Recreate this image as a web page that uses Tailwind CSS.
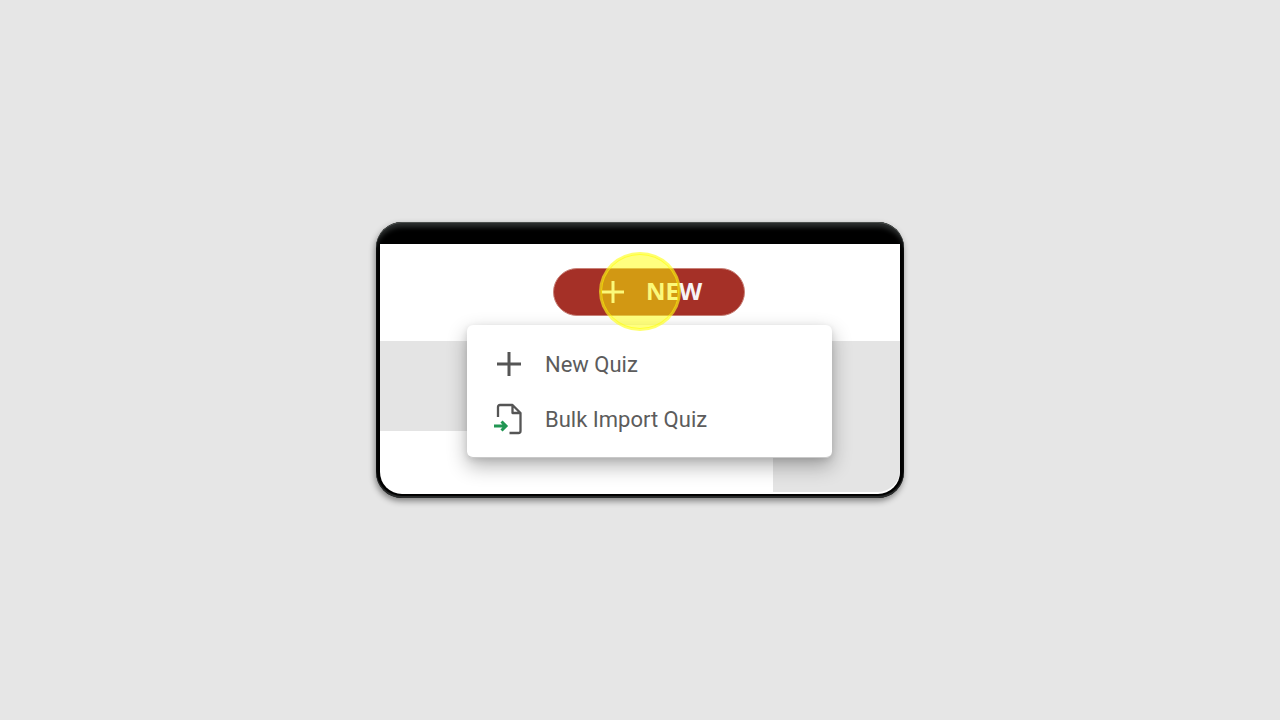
<!DOCTYPE html>
<html lang="en">
<head>
<meta charset="utf-8">
<meta name="viewport" content="width=device-width, initial-scale=1">
<title>New Quiz</title>
<script src="https://cdn.jsdelivr.net/npm/@tailwindcss/browser@4"></script>
</head>
<body class="flex min-h-screen items-center justify-center bg-[#e6e6e6]">
<main class="w-full max-w-[528px] rounded-[26px] bg-black px-1 pt-[22px] pb-1 shadow-[-1px_3px_6px_rgba(0,0,0,0.45),inset_0_1px_0_#4c504e,inset_0_7px_5px_-2px_#2c2f2f,inset_0_-2px_1px_#2c2e2e]">
  <div class="overflow-hidden rounded-b-[22px]">
    <header class="relative flex justify-center bg-white pt-6 pb-[25px] pl-[18px]">
      <button type="button" aria-haspopup="menu" aria-expanded="true" class="flex h-12 w-48 items-center gap-[22px] rounded-full border border-[#c98279] bg-[#a53027] pl-12 font-['Open_Sans',sans-serif] text-2xl font-bold text-[#f6f3f5]">
        <svg class="size-[22px] shrink-0" viewBox="0 0 22 22" fill="none" stroke="currentColor" stroke-width="3" aria-hidden="true"><path d="M11 0v22M0 11h22"/></svg>
        <span class="pb-0.5">NEW</span>
      </button>
      <!-- Open menu below the button -->
      <div role="menu" class="absolute inset-x-0 top-[81px] z-10 mr-[68px] ml-[87px] flex flex-col gap-px rounded-md border-b border-[#c9c9c9] bg-white pt-3 pb-[11px] font-[Roboto,sans-serif] text-[22px] text-[#5c5c5c] shadow-[0_8px_20px_rgba(0,0,0,0.3),0_2px_6px_rgba(0,0,0,0.1)]">
        <button type="button" role="menuitem" class="flex h-[54px] w-full items-center gap-5 pl-[26px]">
          <svg class="size-8 shrink-0" viewBox="0 0 32 32" fill="none" stroke="#555" stroke-width="3" aria-hidden="true"><path d="M16 4v24M4 16h24"/></svg>
          New Quiz
        </button>
        <button type="button" role="menuitem" class="flex h-[54px] w-full items-center gap-5 pl-[26px]">
          <svg class="size-8 shrink-0" viewBox="0 0 32 32" fill="none" aria-hidden="true">
            <path d="M5 14V4q0-2 2-2h12.500l8 8v18q0 2-2 2H16.500M19.500 2v8h8" stroke="#555" stroke-width="2.300" stroke-linejoin="round"/>
            <path d="M1 23h11M8.500 18.500l4.500 4.500l-4.500 4.500" stroke="#219653" stroke-width="3"/>
          </svg>
          Bulk Import Quiz
        </button>
      </div>
      <!-- Click highlight -->
      <span class="pointer-events-none absolute top-2 left-[219px] z-20 h-[79px] w-[82px] rounded-[50%] border-2 border-[#ffff40]/30 bg-[#ffff00]/50 shadow-[inset_0_0_0_1px_rgba(255,255,0,0.6)]" aria-hidden="true"></span>
    </header>
    <div class="h-[90px] bg-[#e4e4e4]"></div>
    <div class="flex h-[63px] bg-white pb-[2px]">
      <div class="grow"></div>
      <div class="w-[127px] rounded-br-[22px] bg-[#e4e4e4]"></div>
    </div>
  </div>
</main>
</body>
</html>
